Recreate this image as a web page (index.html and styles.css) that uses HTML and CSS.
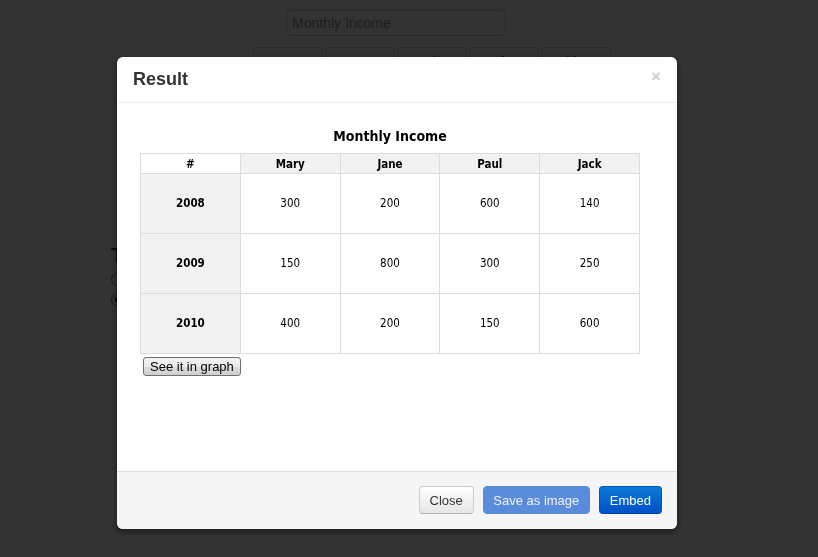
FILE: index.html
```html
<!DOCTYPE html>
<html>
<head>
<meta charset="utf-8">
<title>Result</title>
<link rel="stylesheet" href="styles.css">
</head>
<body>
<div class="page">
  <div class="field">Monthly Income</div>
  <div class="names">
    <span class="name-btn">Mary</span>
    <span class="name-btn">Jane</span>
    <span class="name-btn">Paul</span>
    <span class="name-btn">Jack</span>
    <span class="name-btn">Add</span>
  </div>
  <div class="intro">
    <h2 class="intro-title">Type</h2>
    <label class="opt"><span class="radio"></span>Table</label>
    <label class="opt"><span class="radio on"></span>Graph</label>
  </div>
</div>
<div class="backdrop"></div>
<div class="modal">
  <div class="modal-header">
    <h3 class="modal-title">Result</h3>
    <span class="close">×</span>
  </div>
  <div class="modal-body">
    <div class="chart-title">Monthly Income</div>
    <table class="grid">
      <thead>
        <tr><th class="corner">#</th><th>Mary</th><th>Jane</th><th>Paul</th><th>Jack</th></tr>
      </thead>
      <tbody>
        <tr><th>2008</th><td>300</td><td>200</td><td>600</td><td>140</td></tr>
        <tr><th>2009</th><td>150</td><td>800</td><td>300</td><td>250</td></tr>
        <tr><th>2010</th><td>400</td><td>200</td><td>150</td><td>600</td></tr>
      </tbody>
    </table>
    <button class="graph-btn">See it in graph</button>
  </div>
  <div class="modal-footer">
    <button class="btn btn-default">Close</button>
    <button class="btn btn-disabled">Save as image</button>
    <button class="btn btn-primary">Embed</button>
  </div>
</div>
</body>
</html>
```
FILE: styles.css
```css
* { box-sizing: border-box; }
html, body { margin: 0; height: 100%; }
body {
  background: #fff;
  font-family: "Liberation Sans", Arial, sans-serif;
  font-size: 14px;
  color: #333;
  overflow: hidden;
}
.page { padding-top: 10px; }
.field {
  margin-left: 286px;
  width: 220px;
  height: 26px;
  border: 1px solid #ccc;
  border-radius: 4px;
  padding: 0 5px;
  line-height: 24px;
  color: #999;
}
.names { display: flex; gap: 2px; margin: 11px 0 0 253px; }
.name-btn {
  width: 70px;
  height: 30px;
  border: 1px solid #ccc;
  border-radius: 4px;
  background: linear-gradient(#fff, #e6e6e6);
  line-height: 28px;
  padding-left: 10px;
  color: #333;
}
.intro { margin: 166px 0 0 111px; }
.intro-title { font-size: 21px; margin: 0 0 2px; color: #333; line-height: 24px; }
.opt { display: flex; align-items: center; gap: 6px; height: 20px; }
.radio { width: 13px; height: 13px; border: 1px solid #888; border-radius: 50%; }
.radio.on { background: radial-gradient(#333 35%, #fff 40%); }

.backdrop { position: fixed; inset: 0; background: rgba(0, 0, 0, 0.8); }
.modal {
  position: fixed;
  top: 57px;
  left: 117px;
  width: 560px;
  background: #fff;
  border-radius: 6px;
  box-shadow: 0 3px 7px rgba(0, 0, 0, 0.5);
  overflow: hidden;
}
.modal-header {
  height: 46px;
  border-bottom: 1px solid #eee;
  padding: 0 16px;
  display: flex;
  align-items: center;
  justify-content: space-between;
}
.modal-title { margin: 0; font-size: 18px; font-weight: bold; color: #333; }
.close {
  align-self: flex-start;
  margin-top: 10px;
  font-size: 17px;
  line-height: 20px;
  font-weight: bold;
  color: #000;
  opacity: 0.2;
}
.modal-body { height: 368px; padding: 23px 22px 0 23px; }
.chart-title {
  width: 500px;
  text-align: center;
  font-family: "DejaVu Sans Condensed", "DejaVu Sans", sans-serif;
  font-stretch: condensed;
  font-weight: bold;
  font-size: 14px;
  line-height: 20px;
  color: #000;
  margin-bottom: 7px;
}
.grid {
  width: 500px;
  border-collapse: collapse;
  table-layout: fixed;
  font-family: "DejaVu Sans Condensed", "DejaVu Sans", sans-serif;
  font-stretch: condensed;
  font-size: 11.5px;
  color: #000;
}
.grid th, .grid td { border: 1px solid #ddd; text-align: center; padding: 0; }
.grid th { font-weight: bold; background: #f2f2f2; }
.grid thead th { height: 20px; }
.grid thead th.corner { background: #fff; }
.grid td { height: 60px; font-size: 11.5px; padding-bottom: 2px; }
.grid tbody th { padding-bottom: 2px; }
.graph-btn {
  display: block;
  margin: 3px 0 0 3px;
  height: 19px;
  padding: 0 6px;
  font-family: "Liberation Sans", Arial, sans-serif;
  font-size: 13px;
  color: #000;
  border: 1px solid #707070;
  border-radius: 3px;
  background: linear-gradient(#f2f2f2 0%, #ebebeb 50%, #dddddd 51%, #cfcfcf 100%);
}
.modal-footer {
  height: 58px;
  border-top: 1px solid #ddd;
  background: #f5f5f5;
  padding: 14px 15px 0;
  display: flex;
  justify-content: flex-end;
  align-items: flex-start;
  gap: 9px;
}
.btn {
  height: 28px;
  padding: 0 10px;
  font-family: "Liberation Sans", Arial, sans-serif;
  font-size: 13px;
  border-radius: 4px;
  border: 1px solid;
}
.btn-default {
  color: #333;
  background: linear-gradient(#fff, #e6e6e6);
  border-color: #ccc #ccc #b3b3b3;
}
.btn-disabled {
  padding: 0 9.5px;
  color: #eef3fb;
  background: #5a8cdb;
  border-color: #5a8cdb;
}
.btn-primary {
  color: #fff;
  background: linear-gradient(#0a7ad6, #0050c8);
  border-color: #0055c4 #0055c4 #0040a8;
}
```
